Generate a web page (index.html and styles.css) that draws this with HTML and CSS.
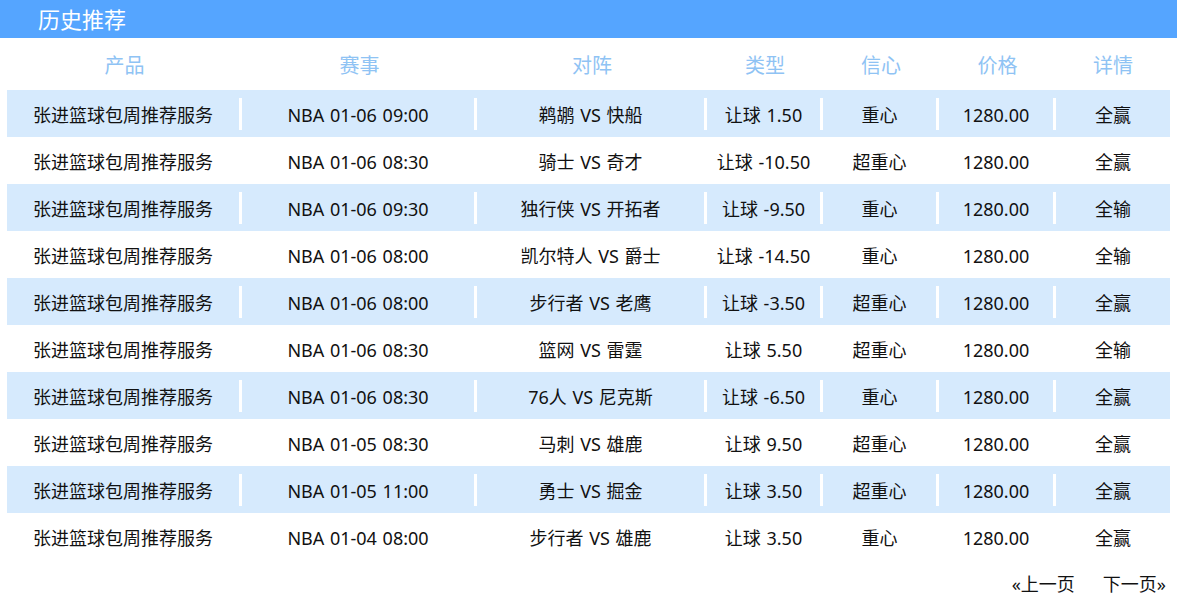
FILE: index.html
```html
<!DOCTYPE html>
<html lang="zh-CN">
<head>
<meta charset="utf-8">
<title>历史推荐</title>
<link rel="stylesheet" href="styles.css">
</head>
<body>
<div class="title-bar"><h1 class="title">历史推荐</h1></div>
<div class="table">
  <div class="row head">
    <div class="cell">产品</div><div class="cell">赛事</div><div class="cell">对阵</div><div class="cell">类型</div><div class="cell">信心</div><div class="cell">价格</div><div class="cell">详情</div>
  </div>
  <div class="row alt">
    <div class="cell">张进篮球包周推荐服务</div><div class="cell">NBA 01-06 09:00</div><div class="cell">鹈鹕 VS 快船</div><div class="cell">让球 1.50</div><div class="cell">重心</div><div class="cell">1280.00</div><div class="cell">全赢</div>
  </div>
  <div class="row">
    <div class="cell">张进篮球包周推荐服务</div><div class="cell">NBA 01-06 08:30</div><div class="cell">骑士 VS 奇才</div><div class="cell">让球 -10.50</div><div class="cell">超重心</div><div class="cell">1280.00</div><div class="cell">全赢</div>
  </div>
  <div class="row alt">
    <div class="cell">张进篮球包周推荐服务</div><div class="cell">NBA 01-06 09:30</div><div class="cell">独行侠 VS 开拓者</div><div class="cell">让球 -9.50</div><div class="cell">重心</div><div class="cell">1280.00</div><div class="cell">全输</div>
  </div>
  <div class="row">
    <div class="cell">张进篮球包周推荐服务</div><div class="cell">NBA 01-06 08:00</div><div class="cell">凯尔特人 VS 爵士</div><div class="cell">让球 -14.50</div><div class="cell">重心</div><div class="cell">1280.00</div><div class="cell">全输</div>
  </div>
  <div class="row alt">
    <div class="cell">张进篮球包周推荐服务</div><div class="cell">NBA 01-06 08:00</div><div class="cell">步行者 VS 老鹰</div><div class="cell">让球 -3.50</div><div class="cell">超重心</div><div class="cell">1280.00</div><div class="cell">全赢</div>
  </div>
  <div class="row">
    <div class="cell">张进篮球包周推荐服务</div><div class="cell">NBA 01-06 08:30</div><div class="cell">篮网 VS 雷霆</div><div class="cell">让球 5.50</div><div class="cell">超重心</div><div class="cell">1280.00</div><div class="cell">全输</div>
  </div>
  <div class="row alt">
    <div class="cell">张进篮球包周推荐服务</div><div class="cell">NBA 01-06 08:30</div><div class="cell">76人 VS 尼克斯</div><div class="cell">让球 -6.50</div><div class="cell">重心</div><div class="cell">1280.00</div><div class="cell">全赢</div>
  </div>
  <div class="row">
    <div class="cell">张进篮球包周推荐服务</div><div class="cell">NBA 01-05 08:30</div><div class="cell">马刺 VS 雄鹿</div><div class="cell">让球 9.50</div><div class="cell">超重心</div><div class="cell">1280.00</div><div class="cell">全赢</div>
  </div>
  <div class="row alt">
    <div class="cell">张进篮球包周推荐服务</div><div class="cell">NBA 01-05 11:00</div><div class="cell">勇士 VS 掘金</div><div class="cell">让球 3.50</div><div class="cell">超重心</div><div class="cell">1280.00</div><div class="cell">全赢</div>
  </div>
  <div class="row">
    <div class="cell">张进篮球包周推荐服务</div><div class="cell">NBA 01-04 08:00</div><div class="cell">步行者 VS 雄鹿</div><div class="cell">让球 3.50</div><div class="cell">重心</div><div class="cell">1280.00</div><div class="cell">全赢</div>
  </div>
</div>
<div class="pager">
  <a class="pager-link" href="#">«上一页</a>
  <a class="pager-link" href="#">下一页»</a>
</div>
</body>
</html>
```

FILE: styles.css
```css
* { box-sizing: border-box; }
html, body { margin: 0; padding: 0; background: #fff; }
body {
  font-family: "Noto Sans", "Noto Sans CJK SC", sans-serif;
  color: #111;
  width: 1177px;
}
.title-bar {
  height: 38px;
  background: #55a5ff;
  display: flex;
  align-items: center;
  padding-left: 38px;
}
.title {
  margin: 0;
  font-size: 22px;
  font-weight: normal;
  color: #fff;
  line-height: 1;
}
.table {
  margin-left: 7px;
  width: 1163px;
}
.row {
  display: grid;
  grid-template-columns: 235px 235px 230px 116px 116px 117px 114px;
  height: 47px;
  align-items: center;
  font-size: 18px;
}
.row.alt { background: #d6eafd; }
.row.head {
  height: 52px;
  font-size: 20px;
  color: #8fc3f4;
}
.cell {
  height: 32px;
  display: flex;
  align-items: center;
  justify-content: center;
  white-space: pre;
  line-height: 1;
  padding-top: 3px;
  border-right: 3px solid #fff;
  word-spacing: 1px;
}
.cell:last-child { border-right: none; }
.head .cell { border-right: none; }
.pager {
  display: flex;
  justify-content: flex-end;
  gap: 28px;
  padding: 13px 11px 0 0;
}
.pager-link {
  font-size: 18px;
  color: #111;
  text-decoration: none;
  line-height: 22px;
}
```
